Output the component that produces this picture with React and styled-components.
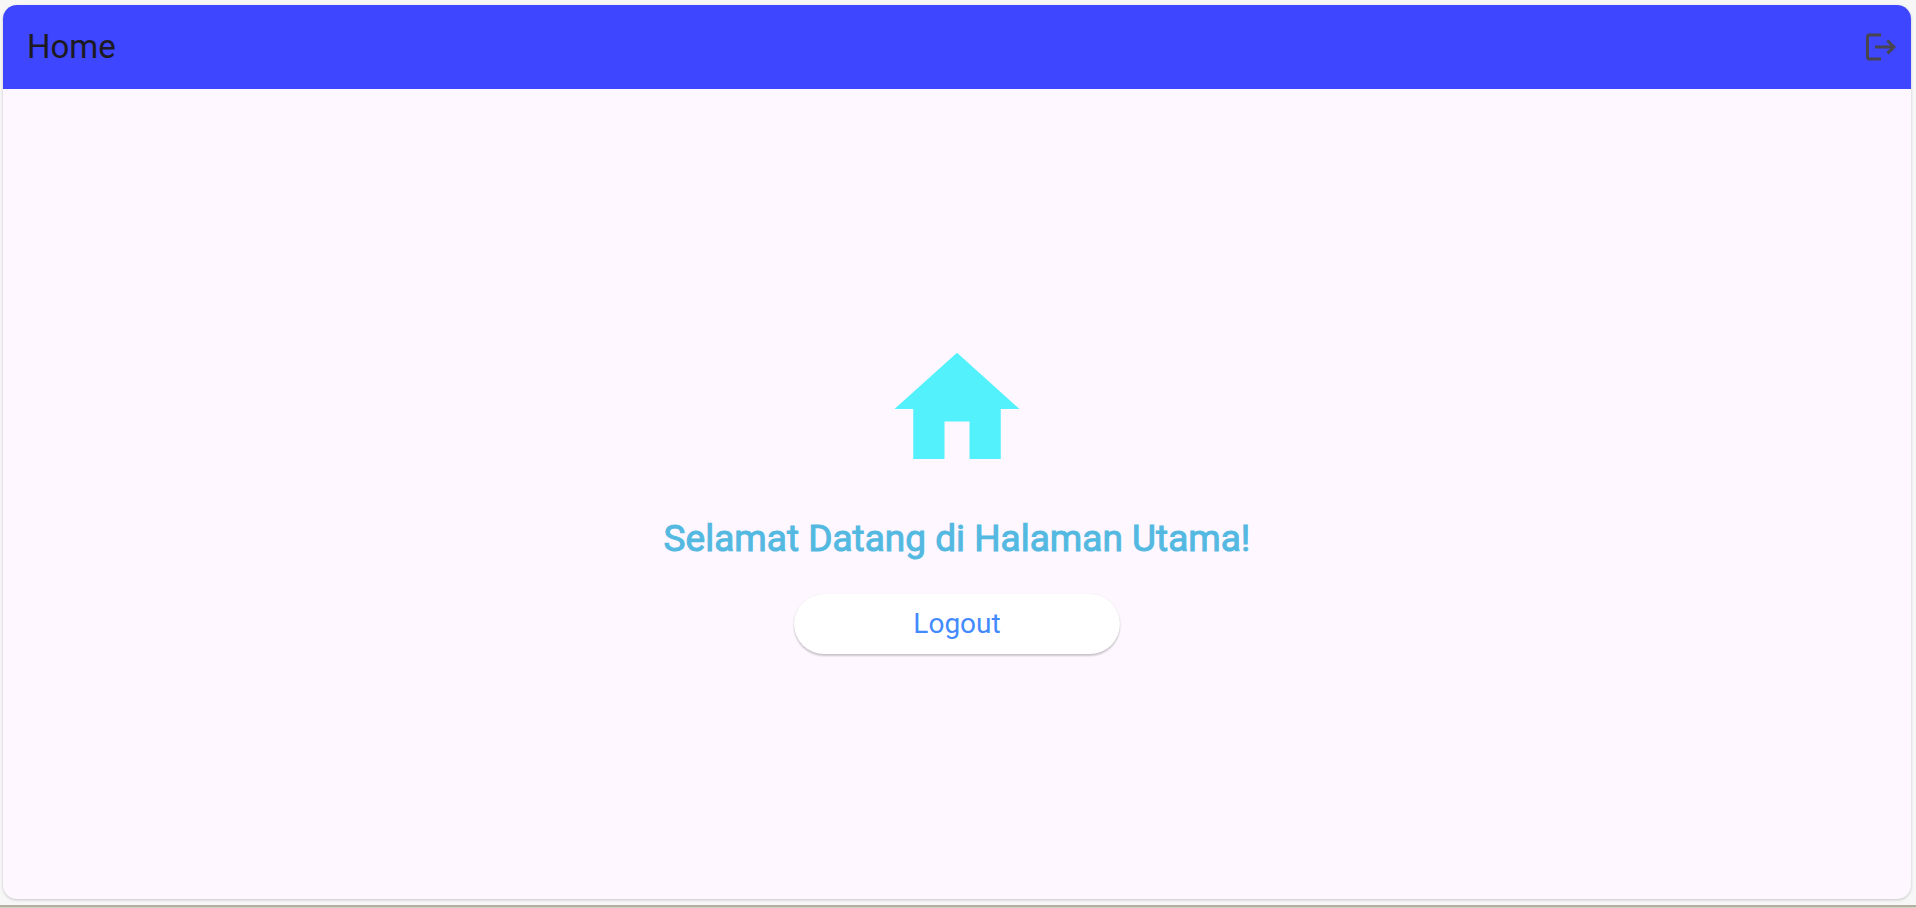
import React from "react";
import styled, { createGlobalStyle } from "styled-components";

const GlobalStyle = createGlobalStyle`
  *, *::before, *::after { box-sizing: border-box; }
  body {
    margin: 0;
    background: #f7f7f7;
    font-family: Roboto, "Liberation Sans", sans-serif;
  }
`;

const Page = styled.div`
  min-height: 100vh;
  display: flex;
  flex-direction: column;
`;

const Screen = styled.div`
  flex: 1;
  display: flex;
  flex-direction: column;
  margin: 5px 5px 6px 3px;
  border-radius: 14px;
  overflow: hidden;
  background: #fef7ff;
  box-shadow: 0 1px 3px rgba(0, 0, 0, 0.2);
`;

const AppBar = styled.header`
  height: 84px;
  display: flex;
  align-items: center;
  justify-content: space-between;
  padding: 0 12px 0 24px;
  background: #3e46ff;
`;

const Title = styled.h1`
  margin: 0;
  font-size: 33px;
  line-height: 42px;
  font-weight: 400;
  color: #1d1b20;
`;

const IconButton = styled.button`
  display: flex;
  padding: 0;
  border: 0;
  background: none;
  color: #49454f;
  cursor: pointer;
`;

const Icon = styled.svg`
  display: block;
  width: ${({ $size }) => $size}px;
  height: ${({ $size }) => $size}px;
  fill: currentColor;
`;

const Main = styled.main`
  flex: 1;
  display: flex;
  flex-direction: column;
  align-items: center;
  justify-content: center;
  gap: 30px;
  color: #52f1fc;
`;

const Welcome = styled.h2`
  margin: 0;
  font-size: 37px;
  line-height: 50px;
  font-weight: 400;
  text-align: center;
  color: #54b9e1;
  -webkit-text-stroke: 1px currentColor;
`;

const LogoutButton = styled.button`
  width: 326px;
  height: 60px;
  padding: 0;
  border: 0;
  border-radius: 30px;
  background: #fff;
  box-shadow: 0 2px 2px rgba(0, 0, 0, 0.2), 0 0 1px rgba(0, 0, 0, 0.12);
  font-family: inherit;
  font-size: 28px;
  line-height: 36px;
  color: #448aff;
  cursor: pointer;
`;

const BottomEdge = styled.div`
  height: 3px;
  border-top: 2px solid #b2afa3;
  background: #d5d3c3;
`;

export default function App() {
  return (
    <Page>
      <GlobalStyle />
      <Screen>
        <AppBar>
          <Title>Home</Title>
          <IconButton type="button" aria-label="Logout">
            <Icon $size={36} viewBox="0 0 24 24" aria-hidden="true">
              <path d="M17 7l-1.41 1.41L18.17 11H8v2h10.17l-2.58 2.58L17 17l5-5zM4 5h8V3H4c-1.1 0-2 .9-2 2v14c0 1.1.9 2 2 2h8v-2H4V5z" />
            </Icon>
          </IconButton>
        </AppBar>
        <Main>
          <Icon $size={150} viewBox="0 0 24 24" aria-hidden="true">
            <path d="M10 20v-6h4v6h5v-8h3L12 3 2 12h3v8z" />
          </Icon>
          <Welcome>Selamat Datang di Halaman Utama!</Welcome>
          <LogoutButton type="button">Logout</LogoutButton>
        </Main>
      </Screen>
      <BottomEdge />
    </Page>
  );
}
